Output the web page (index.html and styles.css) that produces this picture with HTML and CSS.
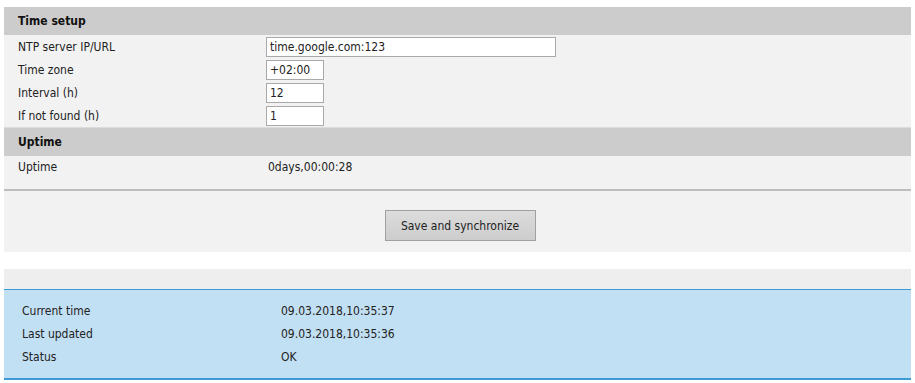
FILE: index.html
```html
<!DOCTYPE html>
<html lang="en">
<head>
    <meta charset="UTF-8">
    <title>Time setup</title>
    <link rel="stylesheet" href="styles.css">
</head>
<body>
    <div class="panel">
        <div class="section-head">Time setup</div>
        <div class="rows">
            <div class="row">
                <span>NTP server IP/URL</span>
                <input type="text" class="input wide" value="time.google.com:123">
            </div>
            <div class="row">
                <span>Time zone</span>
                <input type="text" class="input small" value="+02:00">
            </div>
            <div class="row">
                <span>Interval (h)</span>
                <input type="text" class="input small" value="12">
            </div>
            <div class="row">
                <span>If not found (h)</span>
                <input type="text" class="input small" value="1">
            </div>
        </div>

        <div class="section-head">Uptime</div>
        <div class="rows uptime">
            <div class="row">
                <span>Uptime</span>
                <span class="value">0days,00:00:28</span>
            </div>
        </div>

        <div class="actions">
            <button class="button">Save and synchronize</button>
        </div>
    </div>

    <div class="status-bar"></div>
    <div class="status">
        <div class="status-row">
            <span>Current time</span>
            <span>09.03.2018,10:35:37</span>
        </div>
        <div class="status-row">
            <span>Last updated</span>
            <span>09.03.2018,10:35:36</span>
        </div>
        <div class="status-row">
            <span>Status</span>
            <span>OK</span>
        </div>
    </div>
</body>
</html>
```

FILE: styles.css
```css
/* General */
body {
    font-family: 'DejaVu Sans Condensed', 'DejaVu Sans', sans-serif;
    font-size: 12px;
    color: #222;
    background: #fff;
    margin: 0;
    padding: 7px 4px 0 4px;
}

/* Section headers */
.section-head {
    background-color: #cccccc;
    height: 28px;
    line-height: 28px;
    padding-left: 14px;
    font-weight: bold;
    color: #111;
}

.rows {
    background-color: #f2f2f2;
    border-bottom: 1px solid #dcdcdc;
}

.row {
    display: grid;
    grid-template-columns: 248px 1fr;
    align-items: center;
    height: 23px;
    padding-left: 14px;
}

.input {
    font-family: inherit;
    font-size: 12px;
    color: #222;
    height: 20px;
    box-sizing: border-box;
    border: 1px solid #a9a9a9;
    background: #fff;
    padding: 0 3px;
    margin: 0;
}

.input.wide {
    width: 290px;
}

.input.small {
    width: 58px;
}

/* Uptime */
.uptime {
    height: 33px;
    border-bottom: 2px solid #bdbdbd;
}

.uptime .row {
    align-items: start;
    padding-top: 4px;
}

.uptime .value {
    padding-left: 2px;
}

/* Button area */
.actions {
    background-color: #f2f2f2;
    display: flex;
    justify-content: center;
    padding: 19px 0 11px 5px;
}

.button {
    font-family: inherit;
    font-size: 12px;
    color: #222;
    width: 151px;
    height: 31px;
    border: 1px solid #a0a0a0;
    background: linear-gradient(#dcdcdc, #cdcdcd);
    cursor: pointer;
}

/* Status block */
.status-bar {
    margin-top: 17px;
    height: 20px;
    background-color: #eeeeee;
}

.status {
    background-color: #c2e0f4;
    border-top: 1px solid #3d9bd6;
    border-bottom: 2px solid #3d9bd6;
    padding: 10px 0 10px 18px;
    height: 68px;
}

.status-row {
    display: grid;
    grid-template-columns: 259px 1fr;
    height: 23px;
    line-height: 23px;
}
```
